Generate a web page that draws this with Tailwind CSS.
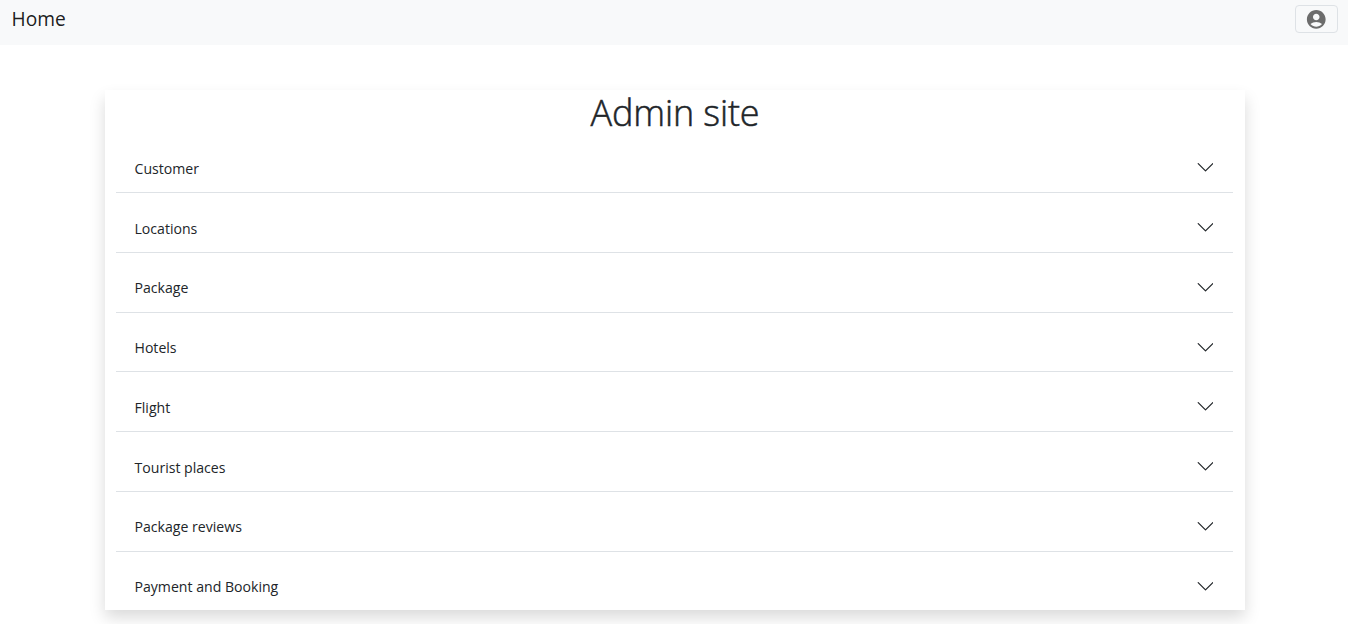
<!DOCTYPE html>
<html lang="en">
<head>
<meta charset="utf-8">
<title>Admin site</title>
<script src="https://cdn.jsdelivr.net/npm/@tailwindcss/browser@4"></script>
</head>
<body class="h-[624px] overflow-hidden bg-white font-['Segoe_UI','Open_Sans','Noto_Sans',sans-serif] text-[#212529]">
<nav class="flex h-[45px] items-start justify-between bg-[#f8f9fa] pl-[11.500px] pr-[10px]">
  <a class="pt-[5px] text-[19.200px] leading-7 text-black/90">Home</a>
  <button class="mt-[5px] flex h-7 w-[43px] items-center justify-center rounded-[4px] border border-[#dee2e6]" aria-label="Account">
    <svg class="mr-px size-[22.500px] text-[#6c6c6c]" viewBox="0 0 24 24" fill="currentColor"><path d="M12 2C6.48 2 2 6.48 2 12s4.48 10 10 10 10-4.480 10-10S17.520 2 12 2zm0 4c1.930 0 3.500 1.570 3.500 3.500S13.930 13 12 13s-3.500-1.570-3.500-3.500S10.070 6 12 6zm0 14c-2.030 0-4.430-.82-6.140-2.880C7.550 15.800 9.680 15 12 15s4.450.8 6.140 2.120C16.430 19.180 14.030 20 12 20z"/></svg>
  </button>
</nav>
<main class="ml-[105px] mt-[45px] h-[520px] w-[1140px] bg-white pl-[11px] pr-3 shadow-[0_7.500px_15px_rgba(0,0,0,0.15)]">
  <h1 class="h-[43.250px] pl-px text-center text-[36px] font-light leading-[46px] tracking-[-0.150px] [-webkit-text-stroke:0.500px_#212529]">Admin site</h1>
  <ul id="rows" class="text-[14.100px]"></ul>
</main>
<script>
const names = ["Customer", "Locations", "Package", "Hotels", "Flight", "Tourist places", "Package reviews", "Payment and Booking"];
document.getElementById("rows").innerHTML = names.map(n => `
<li class="flex h-[59.750px] items-start justify-between border-b border-[#dee2e6] pl-[19px] pr-5 pt-[24.500px] last:h-[58px] last:border-b-0">
  <span class="-ml-[0.500px] leading-[22px]">${n}</span>
  <svg class="mt-[1.500px] size-4" viewBox="0 0 16 16" fill="none" stroke="#212529" stroke-width="1.200" stroke-linecap="round" stroke-linejoin="round"><path d="M1.200 4.600 8.500 11.900l7.300-7.300"/></svg>
</li>`).join("");
</script>
</body>
</html>
